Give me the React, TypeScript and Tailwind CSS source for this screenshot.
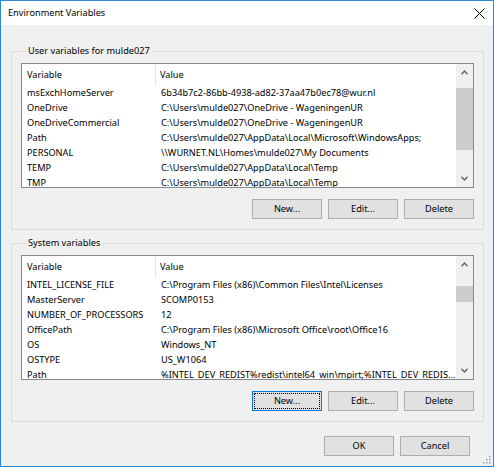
// Environment Variables dialog (Windows 10 style)

type Row = [string, string];

const USER_VARS: Row[] = [
  ["msExchHomeServer", "6b34b7c2-86bb-4938-ad82-37aa47b0ec78@wur.nl"],
  ["OneDrive", "C:\\Users\\mulde027\\OneDrive - WageningenUR"],
  ["OneDriveCommercial", "C:\\Users\\mulde027\\OneDrive - WageningenUR"],
  ["Path", "C:\\Users\\mulde027\\AppData\\Local\\Microsoft\\WindowsApps;"],
  ["PERSONAL", "\\\\WURNET.NL\\Homes\\mulde027\\My Documents"],
  ["TEMP", "C:\\Users\\mulde027\\AppData\\Local\\Temp"],
  ["TMP", "C:\\Users\\mulde027\\AppData\\Local\\Temp"],
];

const SYSTEM_VARS: Row[] = [
  ["INTEL_LICENSE_FILE", "C:\\Program Files (x86)\\Common Files\\Intel\\Licenses"],
  ["MasterServer", "SCOMP0153"],
  ["NUMBER_OF_PROCESSORS", "12"],
  ["OfficePath", "C:\\Program Files (x86)\\Microsoft Office\\root\\Office16"],
  ["OS", "Windows_NT"],
  ["OSTYPE", "US_W1064"],
  ["Path", "%INTEL_DEV_REDIST%redist\\intel64_win\\mpirt;%INTEL_DEV_REDIS..."],
];

function Chevron({ up }: { up?: boolean }) {
  return (
    <svg width="7" height="5" viewBox="0 0 7 5" className={up ? "" : "rotate-180"}>
      <path d="M0.5 4.2 L3.5 1 L6.5 4.2" fill="none" stroke="#606060" strokeWidth="1.3" />
    </svg>
  );
}

function ListView({ rows, thumbTop, thumbH }: { rows: Row[]; thumbTop: number; thumbH: number }) {
  return (
    <div className="h-[125px] border border-[#828790] bg-white flex overflow-hidden">
      <div className="flex-1 min-w-0 flex flex-col overflow-hidden">
        <div className="h-[21px] shrink-0 flex items-center">
          <div className="w-[134px] shrink-0 h-full flex items-center pl-[5px] border-r border-[#e5e5e5]">Variable</div>
          <div className="pl-[4px]">Value</div>
        </div>
        {rows.map(([k, v]) => (
          <div key={k} className="h-[15px] shrink-0 flex items-center whitespace-nowrap">
            <div className="w-[134px] shrink-0 pl-[5px]">{k}</div>
            <div className="pl-[5px]">{v}</div>
          </div>
        ))}
      </div>
      <div className="w-[17px] shrink-0 bg-[#f0f0f0] flex flex-col">
        <div className="h-[17px] flex items-center justify-center"><Chevron up /></div>
        <div className="flex-1 relative">
          <div className="absolute left-0 right-0 bg-[#cdcdcd]" style={{ top: thumbTop, height: thumbH }} />
        </div>
        <div className="h-[17px] flex items-center justify-center"><Chevron /></div>
      </div>
    </div>
  );
}

function Btn({ label, focused }: { label: string; focused?: boolean }) {
  return (
    <button
      type="button"
      className={`w-[70px] h-[20px] bg-[#e1e1e1] border flex items-center justify-center p-[1px] ${
        focused ? "border-[#0078d7]" : "border-[#adadad]"
      }`}
    >
      <span
        className={`w-full h-full flex items-center justify-center ${
          focused ? "outline outline-1 outline-dotted outline-[#000] -outline-offset-1" : ""
        }`}
      >
        {label}
      </span>
    </button>
  );
}

function Group({
  title,
  rows,
  thumbTop,
  thumbH,
  focusNew,
  className,
}: {
  title: string;
  rows: Row[];
  thumbTop: number;
  thumbH: number;
  focusNew?: boolean;
  className?: string;
}) {
  return (
    <fieldset className={`min-w-0 border border-[#dcdcdc] px-[9px] pb-[10px] pt-[4px] ${className ?? ""}`}>
      <legend className="ml-[5px] px-[2px] leading-[16px]">{title}</legend>
      <ListView rows={rows} thumbTop={thumbTop} thumbH={thumbH} />
      <div className="mt-[11px] flex justify-end gap-[6px]">
        <Btn label="New..." focused={focusNew} />
        <Btn label="Edit..." />
        <Btn label="Delete" />
      </div>
    </fieldset>
  );
}

export default function App() {
  return (
    <div
      className="w-[494px] h-[467px] overflow-hidden border border-[#2b88d8] bg-[#f0f0f0] flex flex-col text-[9.2px] text-black relative"
      style={{ fontFamily: '"Segoe UI", "Noto Sans", "Liberation Sans", sans-serif' }}
    >
      <div className="h-[24px] shrink-0 bg-white flex items-center justify-between pl-[7px] pr-[8px]">
        <span>Environment Variables</span>
        <svg width="11" height="11" viewBox="0 0 11 11">
          <path d="M0.5 0.5 L10.5 10.5 M10.5 0.5 L0.5 10.5" stroke="#000" strokeWidth="1" />
        </svg>
      </div>

      <div className="pl-[10px] pr-[9px]">
        <Group className="mt-[18px]" title="User variables for mulde027" rows={USER_VARS} thumbTop={7} thumbH={62} />
        <Group className="mt-[5px]" title="System variables" rows={SYSTEM_VARS} thumbTop={13} thumbH={16} focusNew />
        <div className="mt-[14px] mr-[14px] flex justify-end gap-[6px]">
          <Btn label="OK" />
          <Btn label="Cancel" />
        </div>
      </div>

      <svg className="absolute right-[2px] bottom-[2px]" width="8" height="8" viewBox="0 0 8 8">
        <g fill="#a0a0a0">
          <rect x="6" y="0" width="1.5" height="1.5" />
          <rect x="3" y="3" width="1.5" height="1.5" />
          <rect x="6" y="3" width="1.5" height="1.5" />
          <rect x="0" y="6" width="1.5" height="1.5" />
          <rect x="3" y="6" width="1.5" height="1.5" />
          <rect x="6" y="6" width="1.5" height="1.5" />
        </g>
      </svg>
    </div>
  );
}
